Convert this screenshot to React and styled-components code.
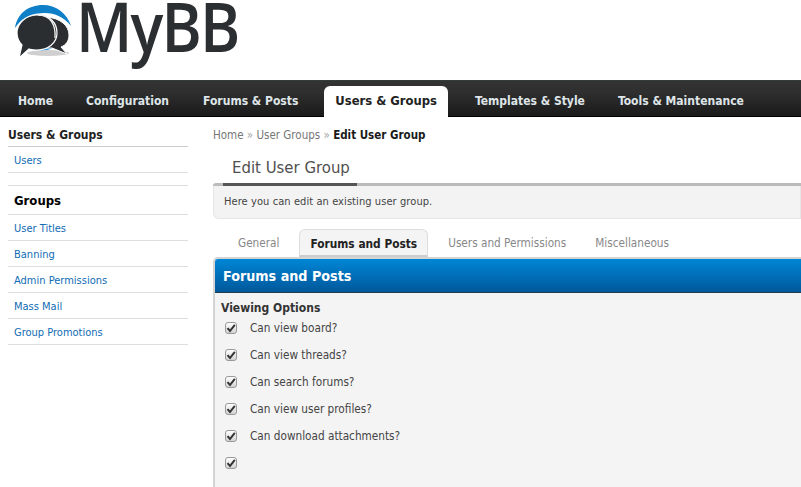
import React from 'react'
import styled, { createGlobalStyle } from 'styled-components'

const GlobalStyle = createGlobalStyle`
    html, body {
        margin: 0;
        padding: 0;
        background: #fff;
        overflow: hidden;
    }
    body {
        font-family: "DejaVu Sans", "Liberation Sans", sans-serif;
        font-stretch: condensed;
        color: #333;
    }
`

const Page = styled.div`
    width: 801px;
    height: 487px;
    overflow: hidden;
`

const Logo = styled.header`
    height: 80px;
    padding-left: 13px;
    display: flex;
    align-items: flex-start;
    gap: 3px;
`

const LogoWord = styled.span`
    font-family: "Open Sans", sans-serif;
    font-size: 68px;
    line-height: 52px;
    font-stretch: normal;
    font-weight: 600;
    letter-spacing: -2px;
    color: #2b2f31;
    transform: scaleX(0.9);
    transform-origin: left top;
`

const Nav = styled.nav`
    height: 37px;
    box-sizing: border-box;
    border-top: 1px solid #2f3f38;
    border-bottom: 1px solid #000;
    background: linear-gradient(#333 0%, #2e2e2e 35%, #1a1a1a 100%);
    display: flex;
    align-items: flex-end;
    padding-left: 18px;
`

const NavItem = styled.a`
    height: 31px;
    line-height: 30px;
    font-size: ${p => (p.$active ? '12.9px' : '12px')};
    font-weight: bold;
    white-space: nowrap;
    box-sizing: border-box;
    color: ${p => (p.$active ? '#222' : '#dfe5e8')};
    background: ${p => (p.$active ? '#fff' : 'transparent')};
    border-radius: ${p => (p.$active ? '6px 6px 0 0' : '0')};
    padding: ${p => (p.$active ? '0 11px' : '0')};
    margin-right: ${p => p.$gap}px;
    margin-bottom: -1px;
`

const Body = styled.div`
    display: flex;
    padding-left: 8px;
`

const Sidebar = styled.aside`
    width: 180px;
    flex: none;
    margin-right: 25px;
`

const SideTitle = styled.h3`
    margin: 0;
    height: 29px;
    line-height: 37px;
    font-size: 12px;
    font-weight: bold;
    color: #222;
    border-bottom: 1px solid #ccc;
`

const SideList = styled.ul`
    list-style: none;
    margin: 0 0 12px;
    padding: 0;
`

const SideHead = styled.li`
    height: 28px;
    line-height: 29px;
    padding-left: 6px;
    font-size: 13px;
    font-weight: bold;
    color: #000;
    border-top: 1px solid #ddd;
    border-bottom: 1px solid #ddd;
`

const SideLink = styled.li`
    height: 25px;
    line-height: 28px;
    padding-left: 6px;
    font-size: 11px;
    color: #0f6cb5;
    border-bottom: 1px solid #ddd;
`

const Main = styled.main`
    flex: 1;
    min-width: 0;
`

const Crumbs = styled.div`
    height: 35px;
    line-height: 36px;
    font-size: 11.5px;
    color: #777;
    white-space: nowrap;

    b {
        font-weight: bold;
        color: #1a1a1a;
    }
    i {
        font-style: normal;
        color: #aaa;
    }
`

const Title = styled.h2`
    margin: 0;
    height: 31px;
    line-height: 31px;
    padding-left: 19px;
    font-size: 16.6px;
    font-weight: normal;
    color: #4f4f4f;
`

const Rule = styled.div`
    height: 3px;
    background: #bbb;
    border-radius: 4px 0 0 0;
    padding-left: 10px;

    &::before {
        content: "";
        display: block;
        width: 134px;
        height: 3px;
        background: #555;
    }
`

const Description = styled.div`
    height: 33px;
    box-sizing: border-box;
    line-height: 32px;
    padding-left: 10px;
    font-size: 11px;
    letter-spacing: 0.08px;
    color: #444;
    background: #f3f3f3;
    border: 1px solid #e6e6e6;
    border-top: none;
    border-radius: 0 0 0 6px;
`

const Tabs = styled.div`
    display: flex;
    align-items: flex-end;
    height: 38px;
    padding-left: 25px;
`

const Tab = styled.a`
    height: 28px;
    box-sizing: border-box;
    line-height: 28px;
    font-size: ${p => (p.$active ? '11.8px' : '11.7px')};
    white-space: nowrap;
    margin-right: ${p => p.$gap}px;
    color: ${p => (p.$active ? '#222' : '#888')};
    font-weight: ${p => (p.$active ? 'bold' : 'normal')};
    background: ${p => (p.$active ? '#f4f4f4' : 'transparent')};
    border: ${p => (p.$active ? '1px solid #ddd' : 'none')};
    border-bottom: ${p => (p.$active ? '2px solid #ccc' : 'none')};
    border-radius: ${p => (p.$active ? '6px 6px 0 0' : '0')};
    padding: ${p => (p.$active ? '0 10px' : '0')};
`

const Panel = styled.section`
    height: 230px;
    background: #f4f4f4;
    border-left: 2px solid #d4d4d4;
    border-top: 2px solid #d4d4d4;
    border-radius: 5px 0 0 0;
`

const PanelHead = styled.div`
    height: 34px;
    box-sizing: border-box;
    line-height: 35px;
    padding-left: 8px;
    font-size: 14.2px;
    font-weight: bold;
    color: #fff;
    background: linear-gradient(#0086d6, #00589b);
    border-bottom: 1px solid #1d3f4f;
    border-radius: 3px 0 0 0;
`

const GroupLabel = styled.div`
    height: 21px;
    line-height: 30px;
    padding-left: 6px;
    font-size: 12px;
    font-weight: bold;
    color: #333;
`

const Option = styled.label`
    height: 27px;
    display: flex;
    align-items: center;
    padding-left: 10px;
    font-size: 11.7px;
    color: #444;
`

const CheckBox = styled.span`
    width: 12px;
    height: 12px;
    box-sizing: border-box;
    flex: none;
    display: flex;
    align-items: center;
    justify-content: center;
    margin-right: 13px;
    border: 1px solid #9a9a9a;
    border-radius: 3px;
    background: linear-gradient(#fff, #d2d2d2);
`

const Check = () => (
    <svg width="10" height="10" viewBox="0 0 10 10">
        <path d="M1.5 5.2 L4 8 L8.8 1.8" fill="none" stroke="#333" strokeWidth="2" />
    </svg>
)

// viewBox uses page coordinates so the shapes can be read against the reference
const LogoMark = () => (
    <svg width="60" height="65" viewBox="13 0 60 65">
        <ellipse cx="48" cy="53" rx="21" ry="3" fill="#cfcfcf" />
        <path d="M15 28 C17 14 28 5 43 5 C56 5 67 13 71 26 C64 17 55 13 45 13 C32 13 22 17 15 28Z" fill="#0f80c8" />
        <path d="M28 47 C36 44 46 44 56 46 C50 51 36 52 28 47Z" fill="#0f80c8" />
        <path d="M46 17 C61 18 69 26 69 35 C69 41 66 45 61 47 L67 54 L52 48 C50 48 48 48 46 48Z" fill="#2b2e30" stroke="#fff" strokeWidth="1" />
        <path d="M38 15 C50 15 57 23 57 33 C57 43 48 50 37 50 C34 50 31 49.5 29 49 L19 58 L22 45 C18 41 17 37 17 33 C17 23 26 15 38 15Z" fill="#2b2e30" stroke="#fff" strokeWidth="1.2" />
        <path d="M38 15 C50 15 56 24 55 38" fill="none" stroke="#f0f0f0" strokeWidth="1.3" />
    </svg>
)

const navItems = [
    ['Home', 33],
    ['Configuration', 34],
    ['Forums & Posts', 26],
    ['Users & Groups', 27, true],
    ['Templates & Style', 33],
    ['Tools & Maintenance', 0],
]

const sideLinks = ['User Titles', 'Banning', 'Admin Permissions', 'Mass Mail', 'Group Promotions']

const options = [
    'Can view board?',
    'Can view threads?',
    'Can search forums?',
    'Can view user profiles?',
    'Can download attachments?',
    '',
]

export default function App() {
    return (
        <Page>
            <GlobalStyle />
            <Logo>
                <LogoMark />
                <LogoWord>MyBB</LogoWord>
            </Logo>
            <Nav>
                {navItems.map(([label, gap, active]) => (
                    <NavItem key={label} $gap={gap} $active={active}>{label}</NavItem>
                ))}
            </Nav>
            <Body>
                <Sidebar>
                    <SideTitle>Users &amp; Groups</SideTitle>
                    <SideList>
                        <SideLink>Users</SideLink>
                    </SideList>
                    <SideList>
                        <SideHead>Groups</SideHead>
                        {sideLinks.map(label => <SideLink key={label}>{label}</SideLink>)}
                    </SideList>
                </Sidebar>
                <Main>
                    <Crumbs>Home <i>»</i> User Groups <i>»</i> <b>Edit User Group</b></Crumbs>
                    <Title>Edit User Group</Title>
                    <Rule />
                    <Description>Here you can edit an existing user group.</Description>
                    <Tabs>
                        <Tab $gap={20}>General</Tab>
                        <Tab $gap={20} $active>Forums and Posts</Tab>
                        <Tab $gap={29}>Users and Permissions</Tab>
                        <Tab>Miscellaneous</Tab>
                    </Tabs>
                    <Panel>
                        <PanelHead>Forums and Posts</PanelHead>
                        <GroupLabel>Viewing Options</GroupLabel>
                        {options.map((label, i) => (
                            <Option key={i}>
                                <CheckBox><Check /></CheckBox>
                                {label}
                            </Option>
                        ))}
                    </Panel>
                </Main>
            </Body>
        </Page>
    )
}
